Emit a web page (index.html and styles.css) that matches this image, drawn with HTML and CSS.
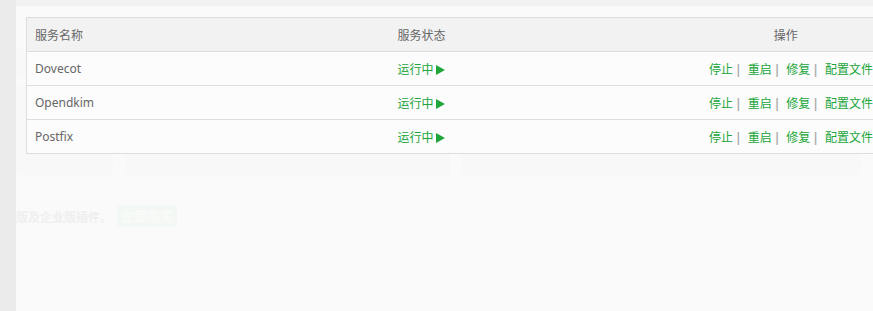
FILE: index.html
```html
<!DOCTYPE html>
<html lang="zh-CN">
<head>
<meta charset="utf-8">
<title>服务状态</title>
<link rel="stylesheet" href="styles.css">
</head>
<body>
<div class="app">
  <div class="side"></div>
  <div class="main">
    <div class="panel">
      <div class="backdrop">
        <div class="bd-tabs">
          <span class="bd-tab t1"></span>
          <span class="bd-tab t2"></span>
          <span class="bd-tab t3"></span>
          <span class="bd-tab t4"></span>
          <span class="bd-tab t5"></span>
          <span class="bd-tab t6"></span>
        </div>
        <div class="bd-cards">
          <div class="bd-card c1"></div>
          <div class="bd-card c2"></div>
          <div class="bd-card c3"></div>
        </div>
        <div class="bd-buy">
          <span class="bd-buy-text">版及企业版插件。</span>
          <span class="bd-buy-btn">立即购买</span>
        </div>
      </div>
      <div class="modal">
        <table class="svc">
          <colgroup>
            <col class="col-name">
            <col class="col-status">
            <col class="col-ops">
          </colgroup>
          <thead>
            <tr><th>服务名称</th><th>服务状态</th><th class="ops-h">操作</th></tr>
          </thead>
          <tbody>
            <tr>
              <td>Dovecot</td>
              <td class="run">运行中<svg class="play" viewBox="0 0 9 10" width="9" height="10"><polygon points="0,0 9,5 0,10"/></svg></td>
              <td class="ops"><a>停止</a><span class="sep">|</span><a>重启</a><span class="sep">|</span><a>修复</a><span class="sep">|</span><a>配置文件</a></td>
            </tr>
            <tr>
              <td>Opendkim</td>
              <td class="run">运行中<svg class="play" viewBox="0 0 9 10" width="9" height="10"><polygon points="0,0 9,5 0,10"/></svg></td>
              <td class="ops"><a>停止</a><span class="sep">|</span><a>重启</a><span class="sep">|</span><a>修复</a><span class="sep">|</span><a>配置文件</a></td>
            </tr>
            <tr>
              <td>Postfix</td>
              <td class="run">运行中<svg class="play" viewBox="0 0 9 10" width="9" height="10"><polygon points="0,0 9,5 0,10"/></svg></td>
              <td class="ops"><a>停止</a><span class="sep">|</span><a>重启</a><span class="sep">|</span><a>修复</a><span class="sep">|</span><a>配置文件</a></td>
            </tr>
          </tbody>
        </table>
      </div>
    </div>
  </div>
</div>
</body>
</html>
```
FILE: styles.css
```css
* { box-sizing: border-box; }
html, body { margin: 0; padding: 0; }
body {
  background: #f1f1f1;
  font-family: "Noto Sans", "Noto Sans CJK SC", sans-serif;
  font-size: 12px;
  color: #666;
  overflow: hidden;
}
.app {
  display: flex;
  height: 311px;
}
.side {
  width: 16px;
  flex: none;
  background: #ebebeb;
}
.main {
  flex: 1;
  min-width: 0;
  background: #f2f2f2;
  padding-top: 6px;
  display: flex;
  flex-direction: column;
}
.panel {
  flex: 1;
  position: relative;
  background: #fafafa;
}

/* faint content behind the dialog */
.bd-tabs {
  display: flex;
  margin-top: 43px;
  height: 28px;
}
.bd-tab {
  background: #f8f8f8;
}
.t1 { width: 74px; }
.t2 { width: 87px; margin-left: 16px; }
.t3 { width: 101px; margin-left: 15px; }
.t4 { width: 98px; margin-left: 14px; }
.t5 { width: 100px; margin-left: 16px; }
.t6 { width: 87px; margin-left: 16px; }
.bd-cards {
  display: flex;
  margin-top: 8px;
  height: 90px;
}
.bd-card {
  height: 90px;
  background: #f8f8f8;
  border-radius: 4px;
}
.c1 { width: 97px; }
.c2 { width: 325px; margin-left: 12px; }
.c3 { width: 400px; margin-left: 11px; }
.bd-buy {
  display: flex;
  align-items: center;
  margin-top: 30px;
  height: 22px;
}
.bd-buy-text {
  font-family: "Noto Sans CJK SC", sans-serif;
  font-size: 12px;
  font-weight: bold;
  color: #efefef;
}
.bd-buy-btn {
  margin-left: 5px;
  height: 22px;
  width: 60px;
  text-align: center;
  line-height: 22px;
  border-radius: 3px;
  background: #f3f8f4;
  color: #fcfcfc;
  font-size: 13px;
}

/* dialog table */
.modal {
  position: absolute;
  top: 11px;
  left: 10px;
  width: 847px;
  overflow: hidden;
}
.svc {
  width: 857px;
  table-layout: fixed;
  border-collapse: collapse;
  border: 1px solid #ddd;
  background: rgba(252, 252, 252, 0.9);
}
.col-name { width: 363px; }
.col-status { width: 299px; }
.col-ops { width: 195px; }
.svc th,
.svc td {
  height: 34px;
  padding: 0 10px 0 8px;
  border-bottom: 1px solid #ddd;
  text-align: left;
  font-weight: normal;
  white-space: nowrap;
  color: #666;
}
.svc thead th {
  background: #f2f2f2;
}
.svc th.ops-h {
  text-align: center;
  padding: 0;
}
.svc td.run {
  color: #20a53a;
}
.play {
  display: inline-block;
  vertical-align: -1px;
  margin-left: 2px;
  fill: #20a53a;
}
.svc td.ops {
  text-align: right;
  padding-right: 10px;
}
.ops a {
  color: #20a53a;
  text-decoration: none;
}
.sep {
  color: #aaa;
  margin: 0 6px 0 2px;
  font-weight: bold;
}
```
